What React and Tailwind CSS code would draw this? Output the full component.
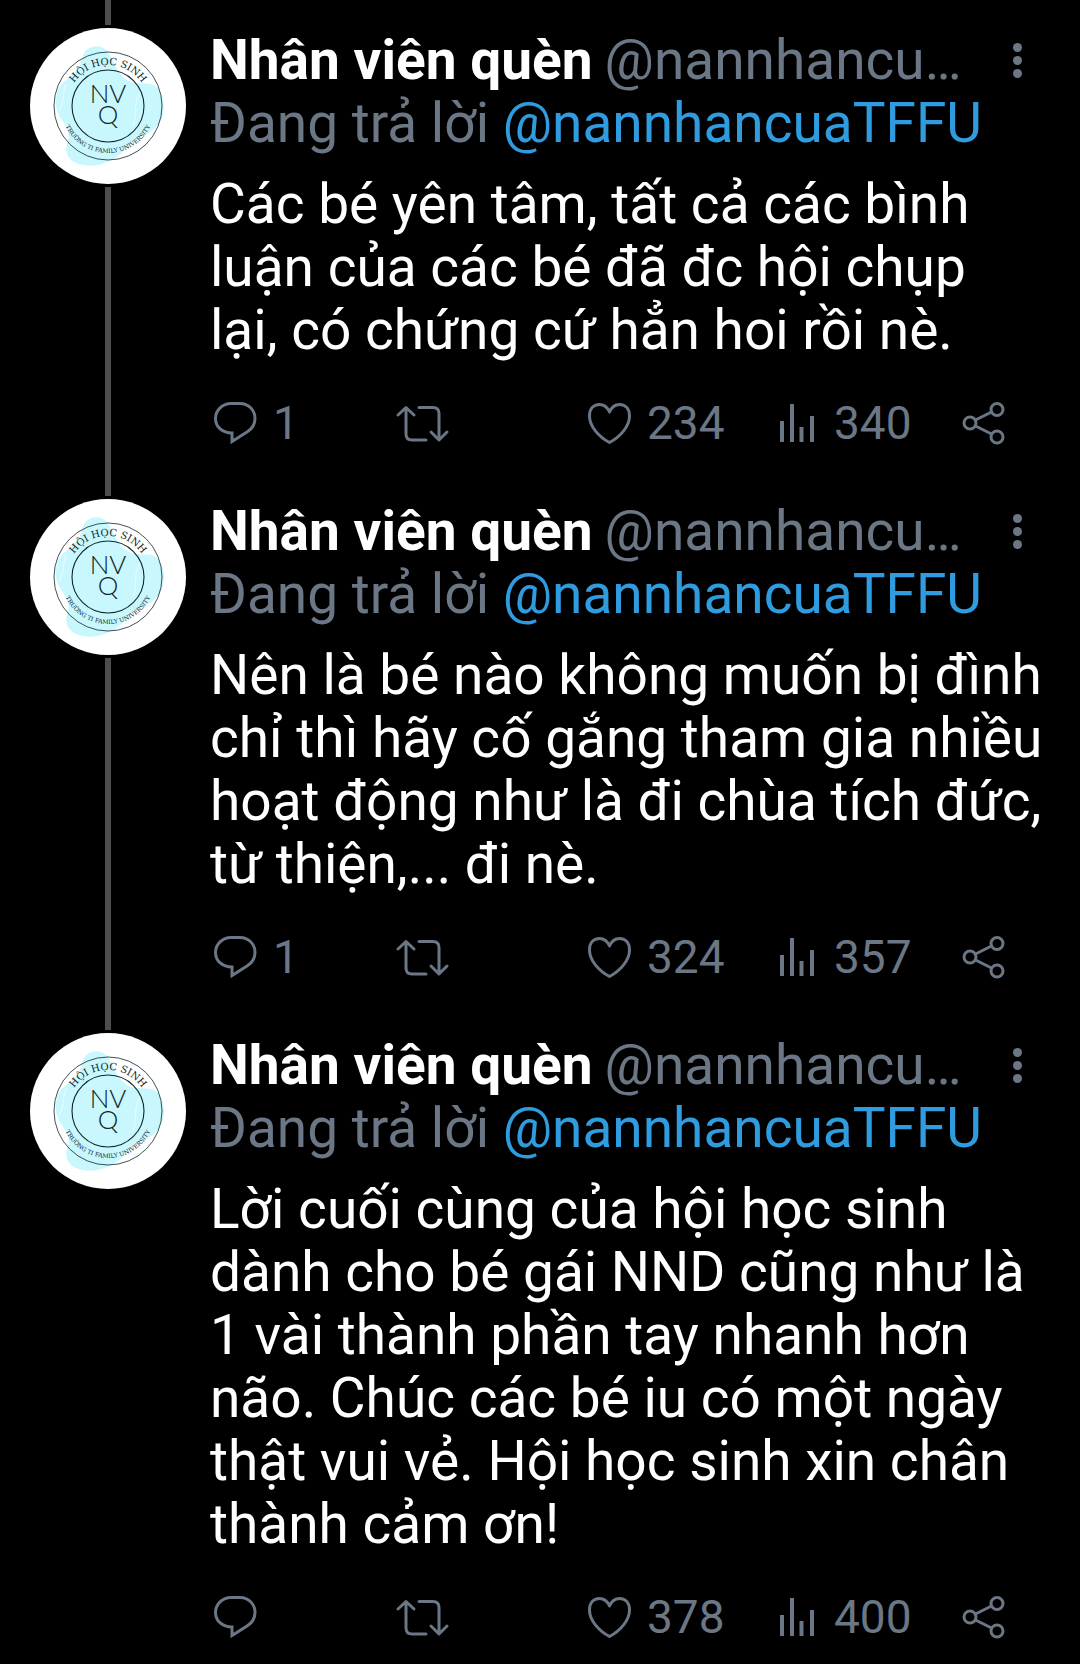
import { useId } from 'react'

const tweets = [
  {
    id: 1,
    text: 'Các bé yên tâm, tất cả các bình luận của các bé đã đc hội chụp lại, có chứng cứ hẳn hoi rồi nè.',
    replies: 1, likes: 234, views: 340,
  },
  {
    id: 2,
    text: 'Nên là bé nào không muốn bị đình chỉ thì hãy cố gắng tham gia nhiều hoạt động như là đi chùa tích đức, từ thiện,... đi nè.',
    replies: 1, likes: 324, views: 357,
  },
  {
    id: 3,
    text: 'Lời cuối cùng của hội học sinh dành cho bé gái NND cũng như là 1 vài thành phần tay nhanh hơn não. Chúc các bé iu có một ngày thật vui vẻ. Hội học sinh xin chân thành cảm ơn!',
    replies: null, likes: 378, views: 400,
  },
]

const Icon = ({ children }) => (
  <svg viewBox="0 0 48 48" className="size-12 shrink-0 overflow-visible" fill="none"
    stroke="currentColor" strokeWidth="3" strokeLinecap="round" strokeLinejoin="round" aria-hidden="true">
    {children}
  </svg>
)

const ReplyIcon = () => (
  <Icon>
    <path strokeLinejoin="miter" d="M20 42.5V34C10.5 34 3.5 28 3.5 19.5S10.5 4.5 19 4.5H28C36.5 4.5 43 11 43 19.5C43 25.5 40 30 35 33Z" />
  </Icon>
)

const RetweetIcon = () => (
  <Icon>
    <path d="M27 41H13Q7 41 7 35V9M-1 16L7 8.5L15 16M20 8.5H34Q40 8.5 40 14.5V40.5M32 33L40 41L48 33" />
  </Icon>
)

const HeartIcon = () => (
  <Icon>
    <path d="M23.5 13C21.5 8.5 18 5.5 13.5 5.5C7 5.5 3.500 10.5 3.500 17C3.500 27.5 13 38 23.5 43.500C34 38 43.500 27.5 43.500 17C43.500 10.5 40 5.5 33.5 5.5C29 5.5 25.5 8.5 23.5 13Z" />
  </Icon>
)

const ViewsIcon = () => (
  <Icon>
    <path strokeWidth="4" strokeLinecap="butt" d="M9 22V43M19 5V43M28.5 28V43M39 17V43" />
  </Icon>
)

const ShareIcon = () => (
  <Icon>
    <circle cx="10" cy="24" r="6" />
    <circle cx="37" cy="10.5" r="6" />
    <circle cx="37" cy="38" r="6" />
    <path d="M15.5 21L31.5 13M15.5 27L31.5 35" />
  </Icon>
)

function Avatar() {
  const id = useId()
  return (
    <svg viewBox="0 0 156 156" className="size-39 shrink-0" role="img" aria-label="Nhân viên quèn">
      <circle cx="78" cy="78" r="78" fill="#fff" />
      <path fill="#c8f8fd" d="M53 28C56 17 71 15 78 24C85 35 87 47 99 53C109 58 121 52 128 60C136 70 136 86 128 97C120 107 108 107 101 115C93 125 84 132 72 136C58 140 41 137 37 126C34 117 41 111 38 103C35 94 27 88 26 78C25 67 28 58 35 53C45 46 49 41 53 28Z" />
      <path fill="none" stroke="#fff" strokeOpacity="0.6" d="M36 56C32 66 35 74 29 82M112 62C102 72 108 86 103 98" />
      <g fill="none" stroke="#10262a">
        <circle cx="78" cy="78" r="54" strokeWidth="0.8" />
        <circle cx="78" cy="78" r="36" strokeWidth="1.1" />
      </g>
      <path id={`${id}t`} fill="none" d="M37 78A41 41 0 0 1 119 78" />
      <path id={`${id}b`} fill="none" d="M31 78A47 47 0 0 0 125 78" />
      <g fill="#10262a" textAnchor="middle" className="font-['DejaVu_Serif',serif]">
        <text className="text-[10px]"><textPath href={`#${id}t`} startOffset="50%">HỘI HỌC SINH</textPath></text>
        <text className="text-[6px]"><textPath href={`#${id}b`} startOffset="50%">TRƯỜNG TI FAMILY UNIVERSITY</textPath></text>
      </g>
      <g fill="#10262a" textAnchor="middle" className="font-['Lato',sans-serif] text-[26px] font-light">
        <text x="78" y="75">NV</text>
        <text x="78" y="96">Q</text>
      </g>
    </svg>
  )
}

function Action({ label, count, children }) {
  return (
    <button type="button" aria-label={label} className="flex flex-1 items-center gap-[13px]">
      {children}
      {count != null && <span>{count}</span>}
    </button>
  )
}

function Tweet({ tweet, last }) {
  return (
    <article className="flex gap-6 pl-[30px] pr-9">
      <div className="flex shrink-0 flex-col items-center gap-[3px]">
        <div className="h-[25px] w-[6px] bg-[#4d4d4d]" />
        <Avatar />
        {!last && <div className="w-[6px] flex-1 bg-[#4d4d4d]" />}
      </div>

      <div className="min-w-0 flex-1 pt-[29px] pb-6">
        <header className="text-[55px] leading-[63px] text-[#6b7785]">
          <div className="flex items-center">
            <h2 className="shrink-0 font-bold text-white">Nhân viên quèn</h2>
            <span className="ml-3 min-w-0 flex-1 truncate">@nannhancuaTFFU</span>
            <button type="button" aria-label="Thêm"
              className="ml-3 flex w-[54px] shrink-0 flex-col items-center gap-1">
              <span className="size-[9px] rounded-full bg-current" />
              <span className="size-[9px] rounded-full bg-current" />
              <span className="size-[9px] rounded-full bg-current" />
            </button>
          </div>
          <p>Đang trả lời <a href="#nannhancuaTFFU" className="text-[#2f9ce0]">@nannhancuaTFFU</a></p>
        </header>

        <p className="mt-[18px] text-[55px] leading-[63px] text-white">{tweet.text}</p>

        <div className="mt-[37px] mr-9 ml-0.5 flex text-[46px] leading-[48px] text-[#6b7785]">
          <Action label="Trả lời" count={tweet.replies}><ReplyIcon /></Action>
          <Action label="Tweet lại"><RetweetIcon /></Action>
          <Action label="Thích" count={tweet.likes}><HeartIcon /></Action>
          <Action label="Lượt xem" count={tweet.views}><ViewsIcon /></Action>
          <button type="button" aria-label="Chia sẻ"><ShareIcon /></button>
        </div>
      </div>
    </article>
  )
}

export default function App() {
  return (
    <main className="min-h-screen bg-black font-['Roboto',sans-serif]">
      {tweets.map((t, i) => (
        <Tweet key={t.id} tweet={t} last={i === tweets.length - 1} />
      ))}
    </main>
  )
}
